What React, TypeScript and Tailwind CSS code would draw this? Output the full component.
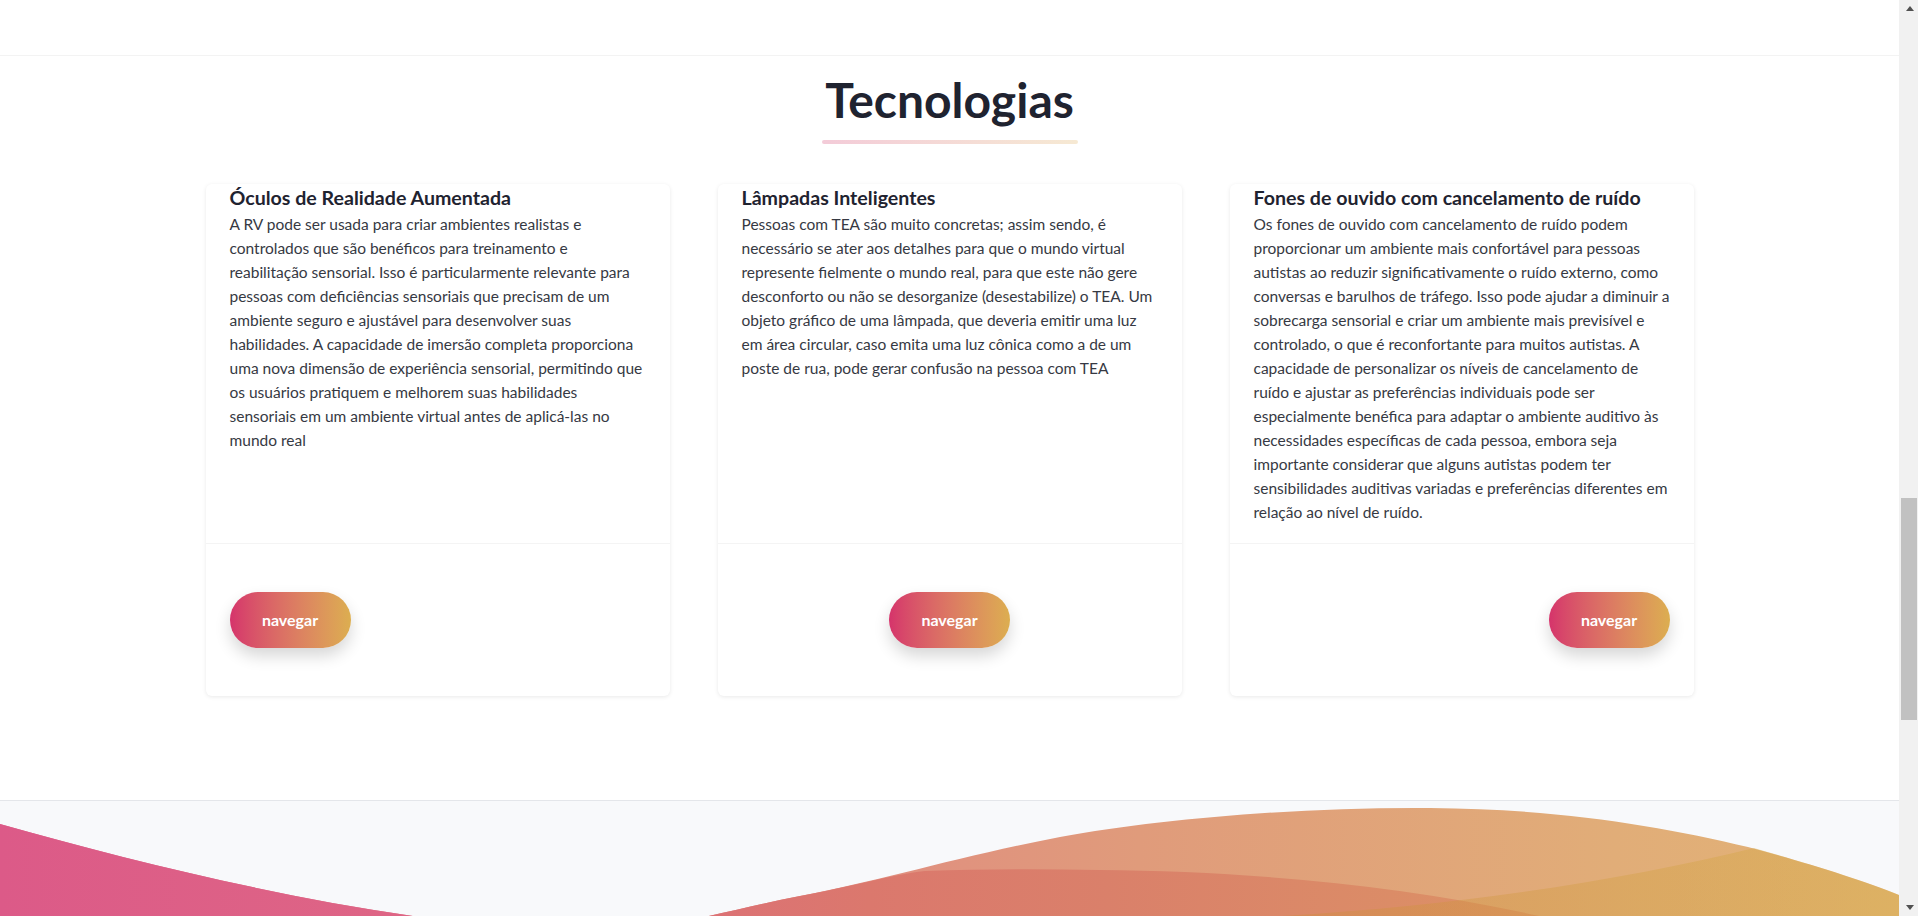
import React from 'react';

type Card = {
  title: string;
  lines: string[];
  align: 'start' | 'center' | 'end';
};

const cards: Card[] = [
  {
    title: 'Óculos de Realidade Aumentada',
    align: 'start',
    lines: [
      'A RV pode ser usada para criar ambientes realistas e',
      'controlados que são benéficos para treinamento e',
      'reabilitação sensorial. Isso é particularmente relevante para',
      'pessoas com deficiências sensoriais que precisam de um',
      'ambiente seguro e ajustável para desenvolver suas',
      'habilidades. A capacidade de imersão completa proporciona',
      'uma nova dimensão de experiência sensorial, permitindo que',
      'os usuários pratiquem e melhorem suas habilidades',
      'sensoriais em um ambiente virtual antes de aplicá-las no',
      'mundo real',
    ],
  },
  {
    title: 'Lâmpadas Inteligentes',
    align: 'center',
    lines: [
      'Pessoas com TEA são muito concretas; assim sendo, é',
      'necessário se ater aos detalhes para que o mundo virtual',
      'represente fielmente o mundo real, para que este não gere',
      'desconforto ou não se desorganize (desestabilize) o TEA. Um',
      'objeto gráfico de uma lâmpada, que deveria emitir uma luz',
      'em área circular, caso emita uma luz cônica como a de um',
      'poste de rua, pode gerar confusão na pessoa com TEA',
    ],
  },
  {
    title: 'Fones de ouvido com cancelamento de ruído',
    align: 'end',
    lines: [
      'Os fones de ouvido com cancelamento de ruído podem',
      'proporcionar um ambiente mais confortável para pessoas',
      'autistas ao reduzir significativamente o ruído externo, como',
      'conversas e barulhos de tráfego. Isso pode ajudar a diminuir a',
      'sobrecarga sensorial e criar um ambiente mais previsível e',
      'controlado, o que é reconfortante para muitos autistas. A',
      'capacidade de personalizar os níveis de cancelamento de',
      'ruído e ajustar as preferências individuais pode ser',
      'especialmente benéfica para adaptar o ambiente auditivo às',
      'necessidades específicas de cada pessoa, embora seja',
      'importante considerar que alguns autistas podem ter',
      'sensibilidades auditivas variadas e preferências diferentes em',
      'relação ao nível de ruído.',
    ],
  },
];

const justify = {
  start: 'justify-start',
  center: 'justify-center',
  end: 'justify-end',
};

const TechCard: React.FC<{ card: Card }> = ({ card }) => (
  <div className="flex flex-col rounded-md bg-white shadow-[0_1px_4px_rgba(0,0,0,0.09)]">
    <div className="flex-1 px-6 pb-[19px]">
      <h3 className="text-[19.6px] leading-[28px] font-bold text-[#1f2330]">{card.title}</h3>
      <p className="text-[15.5px] leading-[24px] text-[#363943]">
        {card.lines.map((line, i) => (
          <span key={i} className="block whitespace-nowrap">
            {line}
          </span>
        ))}
      </p>
    </div>
    <div className={`flex border-t border-[#f4f4f4] px-6 py-12 ${justify[card.align]}`}>
      <button className="h-14 w-[121px] rounded-full bg-gradient-to-r from-[#d5336b] to-[#dcae50] text-[16px] font-bold text-white shadow-[0_8px_16px_rgba(0,0,0,0.16)]">
        navegar
      </button>
    </div>
  </div>
);

const Wave = () => (
  <svg className="block h-[115px] w-full" viewBox="0 0 1899 115" preserveAspectRatio="none">
    <defs>
      <linearGradient id="waveA" x1="0" y1="0" x2="1899" y2="0" gradientUnits="userSpaceOnUse">
        <stop offset="0" stopColor="#e06d92" />
        <stop offset="0.45" stopColor="#e08e80" />
        <stop offset="0.6" stopColor="#e09b7b" />
        <stop offset="0.85" stopColor="#e1ad78" />
        <stop offset="1" stopColor="#e2b376" />
      </linearGradient>
      <linearGradient id="waveB" x1="0" y1="0" x2="1580" y2="0" gradientUnits="userSpaceOnUse">
        <stop offset="0" stopColor="#dc5a88" />
        <stop offset="0.25" stopColor="#de6585" />
        <stop offset="0.55" stopColor="#db786d" />
        <stop offset="0.7" stopColor="#da806a" />
        <stop offset="1" stopColor="#dc9465" />
      </linearGradient>
      <linearGradient id="waveC" x1="1264" y1="0" x2="1899" y2="0" gradientUnits="userSpaceOnUse">
        <stop offset="0" stopColor="#cd8b3b" />
        <stop offset="1" stopColor="#d5ae45" />
      </linearGradient>
    </defs>
    <path
      d="M0,23 C150,65 330,110 520,128 C640,140 720,110 800,95 C880,80 960,55 1060,36 C1160,18 1300,6 1430,7 C1560,8 1660,25 1748,46 C1800,60 1860,78 1899,94 L1899,140 L0,140 Z"
      fill="url(#waveA)"
    />
    <path
      d="M0,23 C150,65 330,110 520,128 C640,140 720,110 800,95 C850,86 890,74 925,70 C980,68 1040,68 1100,69 C1260,70 1440,88 1580,125 L1580,140 L0,140 Z"
      fill="url(#waveB)"
    />
    <path
      d="M1264,116 C1450,106 1620,80 1754,47 C1800,60 1860,78 1899,94 L1899,140 L1264,140 Z"
      fill="url(#waveC)"
      fillOpacity="0.38"
    />
  </svg>
);

const Scrollbar = () => (
  <div className="flex w-[19px] shrink-0 flex-col bg-[#f1f1f1]">
    <div className="flex h-[17px] items-center justify-center pl-[2px]">
      <svg width="8" height="5" viewBox="0 0 8 5">
        <path d="M4,0 L8,5 L0,5 Z" fill="#505050" />
      </svg>
    </div>
    <div className="h-[481px]" />
    <div className="ml-[2px] mr-[1px] h-[222px] bg-[#c1c1c1]" />
    <div className="flex-1" />
    <div className="flex h-[17px] items-center justify-center pl-[2px]">
      <svg width="8" height="5" viewBox="0 0 8 5">
        <path d="M0,0 L8,0 L4,5 Z" fill="#505050" />
      </svg>
    </div>
  </div>
);

export default function App() {
  return (
    <div className="flex h-[916px] w-full overflow-hidden bg-white font-[family-name:Lato,sans-serif]">
      <div className="flex min-w-0 flex-1 flex-col">
        <div className="h-[56px] shrink-0 border-b border-[#f3f3f3] bg-white" />

        <section className="shrink-0 border-b border-[#e4e6ea] pt-[20px] pb-[104px]">
          <div className="flex flex-col items-center">
            <h2 className="text-[48px] leading-[48px] font-bold text-[#1f2330]">Tecnologias</h2>
            <div className="mt-[16px] h-1 w-[256px] rounded-sm bg-gradient-to-r from-[#f3cbd8] to-[#f6e9d3]" />
          </div>

          <div className="mx-auto mt-10 grid w-[1488px] grid-cols-3 gap-12">
            {cards.map((card) => (
              <TechCard key={card.title} card={card} />
            ))}
          </div>
        </section>

        <div className="flex-1 bg-[#f8f9fb]">
          <Wave />
        </div>
      </div>
      <Scrollbar />
    </div>
  );
}
